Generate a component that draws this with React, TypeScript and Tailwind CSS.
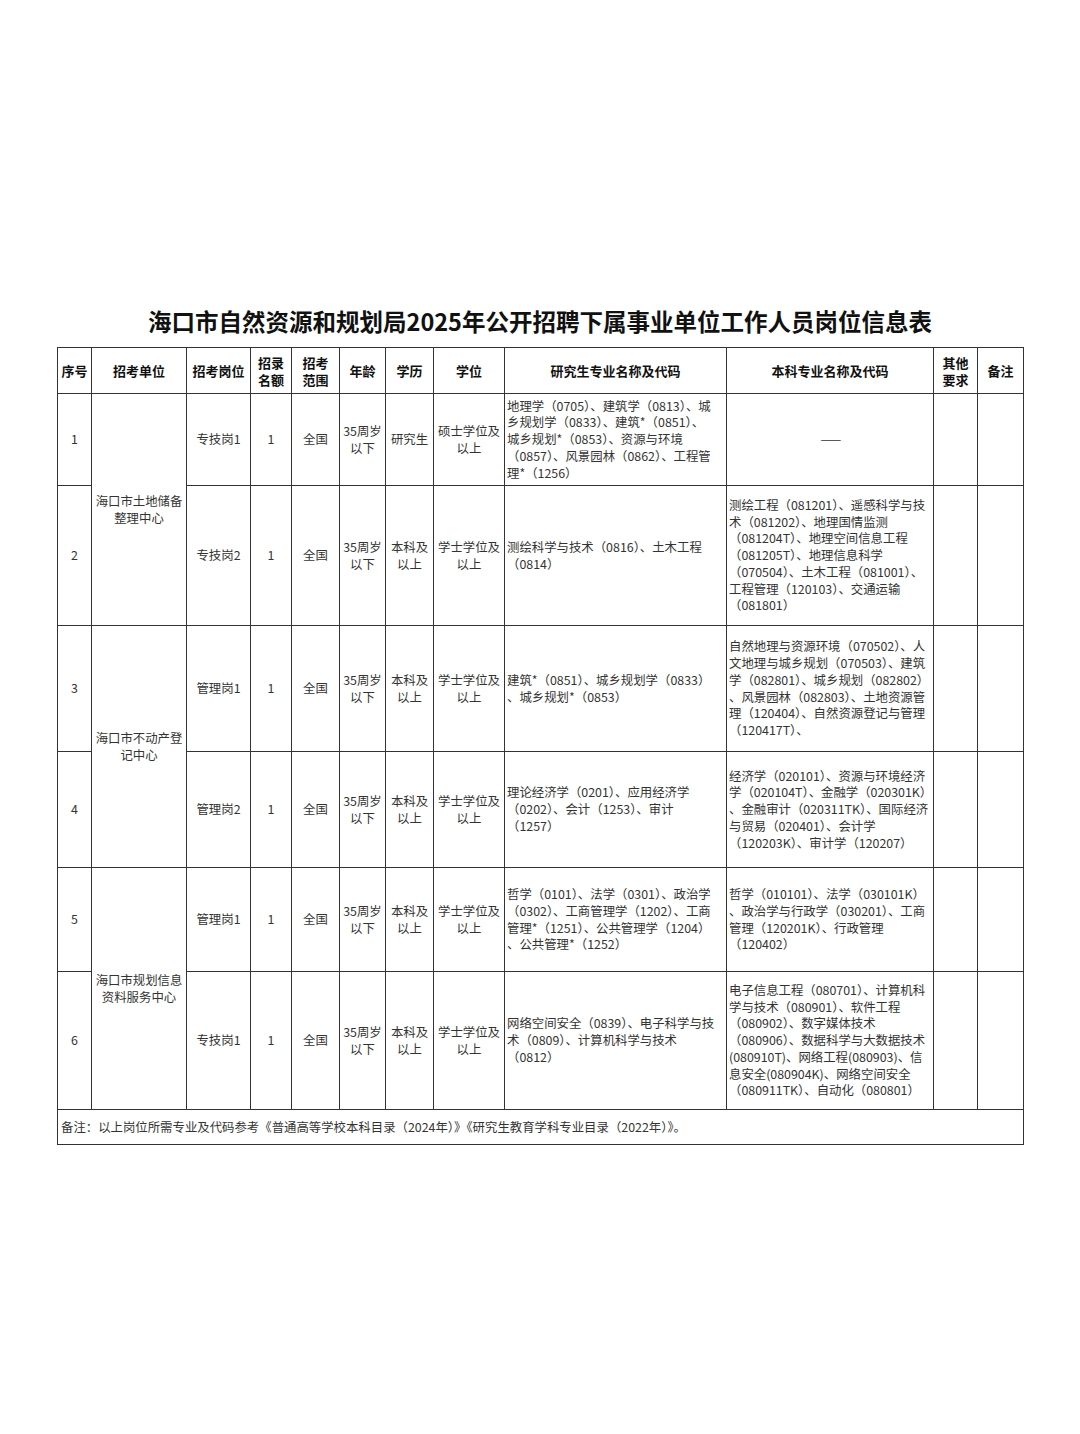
import React from "react";

// One row of the post table
interface Post {
  seq: string;
  post: string;
  edu: string[];
  degree: string[];
  grad: string[];
  under: string[];
  h: string;
}

const posts: Post[] = [
  {
    seq: "1",
    post: "专技岗1",
    edu: ["研究生"],
    degree: ["硕士学位及", "以上"],
    grad: [
      "地理学（0705）、建筑学（0813）、城",
      "乡规划学（0833）、建筑*（0851）、",
      "城乡规划*（0853）、资源与环境",
      "（0857）、风景园林（0862）、工程管",
      "理*（1256）",
    ],
    under: [],
    h: "h-[92px]",
  },
  {
    seq: "2",
    post: "专技岗2",
    edu: ["本科及", "以上"],
    degree: ["学士学位及", "以上"],
    grad: ["测绘科学与技术（0816）、土木工程", "（0814）"],
    under: [
      "测绘工程（081201）、遥感科学与技",
      "术（081202）、地理国情监测",
      "（081204T）、地理空间信息工程",
      "（081205T）、地理信息科学",
      "（070504）、土木工程（081001）、",
      "工程管理（120103）、交通运输",
      "（081801）",
    ],
    h: "h-[140px]",
  },
  {
    seq: "3",
    post: "管理岗1",
    edu: ["本科及", "以上"],
    degree: ["学士学位及", "以上"],
    grad: ["建筑*（0851）、城乡规划学（0833）", "、城乡规划*（0853）"],
    under: [
      "自然地理与资源环境（070502）、人",
      "文地理与城乡规划（070503）、建筑",
      "学（082801）、城乡规划（082802）",
      "、风景园林（082803）、土地资源管",
      "理（120404）、自然资源登记与管理",
      "（120417T）、",
    ],
    h: "h-[126px]",
  },
  {
    seq: "4",
    post: "管理岗2",
    edu: ["本科及", "以上"],
    degree: ["学士学位及", "以上"],
    grad: ["理论经济学（0201）、应用经济学", "（0202）、会计（1253）、审计", "（1257）"],
    under: [
      "经济学（020101）、资源与环境经济",
      "学（020104T）、金融学（020301K）",
      "、金融审计（020311TK）、国际经济",
      "与贸易（020401）、会计学",
      "（120203K）、审计学（120207）",
    ],
    h: "h-[116px]",
  },
  {
    seq: "5",
    post: "管理岗1",
    edu: ["本科及", "以上"],
    degree: ["学士学位及", "以上"],
    grad: [
      "哲学（0101）、法学（0301）、政治学",
      "（0302）、工商管理学（1202）、工商",
      "管理*（1251）、公共管理学（1204）",
      "、公共管理*（1252）",
    ],
    under: [
      "哲学（010101）、法学（030101K）",
      "、政治学与行政学（030201）、工商",
      "管理（120201K）、行政管理",
      "（120402）",
    ],
    h: "h-[104px]",
  },
  {
    seq: "6",
    post: "专技岗1",
    edu: ["本科及", "以上"],
    degree: ["学士学位及", "以上"],
    grad: ["网络空间安全（0839）、电子科学与技", "术（0809）、计算机科学与技术", "（0812）"],
    under: [
      "电子信息工程（080701）、计算机科",
      "学与技术（080901）、软件工程",
      "（080902）、数字媒体技术",
      "（080906）、数据科学与大数据技术",
      "(080910T)、网络工程(080903)、信",
      "息安全(080904K)、网络空间安全",
      "（080911TK）、自动化（080801）",
    ],
    h: "h-[138px]",
  },
];

// unit name shown once for each pair of rows
const units: Record<string, string[]> = {
  "1": ["海口市土地储备", "整理中心"],
  "3": ["海口市不动产登", "记中心"],
  "5": ["海口市规划信息", "资料服务中心"],
};

const Lines = ({ lines }: { lines: string[] }) => (
  <>
    {lines.map((l, i) => (
      <div key={i} className="whitespace-nowrap">
        {l}
      </div>
    ))}
  </>
);

const td = "border border-[#333] align-middle p-0";
const th = "border border-[#333] align-middle p-0 font-bold text-[13px] leading-[17px] text-[#111] text-center";

export default function App() {
  return (
    <div
      className="w-[1080px] h-[1434px] bg-white pt-[306px]"
      style={{ fontFamily: '"Noto Sans CJK SC", "Noto Sans", sans-serif' }}
    >
      <h1 className="text-center text-[23.5px] font-bold leading-[30px] text-[#111] tracking-[0px]">
        海口市自然资源和规划局2025年公开招聘下属事业单位工作人员岗位信息表
      </h1>
      <table className="ml-[57px] mt-[11px] w-[966px] table-fixed border-collapse border-[1.5px] border-[#333] text-[12.4px] leading-[16.7px] text-[#333]">
        <colgroup>
          <col className="w-[34px]" />
          <col className="w-[95px]" />
          <col className="w-[64px]" />
          <col className="w-[41px]" />
          <col className="w-[48px]" />
          <col className="w-[46px]" />
          <col className="w-[48px]" />
          <col className="w-[71px]" />
          <col className="w-[222px]" />
          <col className="w-[207px]" />
          <col className="w-[44px]" />
          <col className="w-[46px]" />
        </colgroup>
        <thead>
          <tr className="h-[46px]">
            <th className={th}>序号</th>
            <th className={th}>招考单位</th>
            <th className={th}>招考岗位</th>
            <th className={th}>
              招录
              <br />
              名额
            </th>
            <th className={th}>
              招考
              <br />
              范围
            </th>
            <th className={th}>年龄</th>
            <th className={th}>学历</th>
            <th className={th}>学位</th>
            <th className={th}>研究生专业名称及代码</th>
            <th className={th}>本科专业名称及代码</th>
            <th className={th}>
              其他
              <br />
              要求
            </th>
            <th className={th}>备注</th>
          </tr>
        </thead>
        <tbody>
          {posts.map((p) => (
            <tr key={p.seq} className={p.h}>
              <td className={`${td} text-center`}>{p.seq}</td>
              {units[p.seq] && (
                <td rowSpan={2} className={`${td} text-center`}>
                  <Lines lines={units[p.seq]} />
                </td>
              )}
              <td className={`${td} text-center`}>{p.post}</td>
              <td className={`${td} text-center`}>1</td>
              <td className={`${td} text-center`}>全国</td>
              <td className={`${td} text-center`}>
                <Lines lines={["35周岁", "以下"]} />
              </td>
              <td className={`${td} text-center`}>
                <Lines lines={p.edu} />
              </td>
              <td className={`${td} text-center`}>
                <Lines lines={p.degree} />
              </td>
              <td className={`${td} pl-[2px] text-left`}>
                <Lines lines={p.grad} />
              </td>
              <td className={`${td} pl-[2px] text-left`}>
                {p.under.length ? (
                  <Lines lines={p.under} />
                ) : (
                  <div className="text-center">——</div>
                )}
              </td>
              <td className={td}></td>
              <td className={td}></td>
            </tr>
          ))}
          <tr className="h-[35px]">
            <td colSpan={12} className={`${td} pl-[3px] text-left`}>
              备注：以上岗位所需专业及代码参考《普通高等学校本科目录（2024年）》《研究生教育学科专业目录（2022年）》。
            </td>
          </tr>
        </tbody>
      </table>
    </div>
  );
}
